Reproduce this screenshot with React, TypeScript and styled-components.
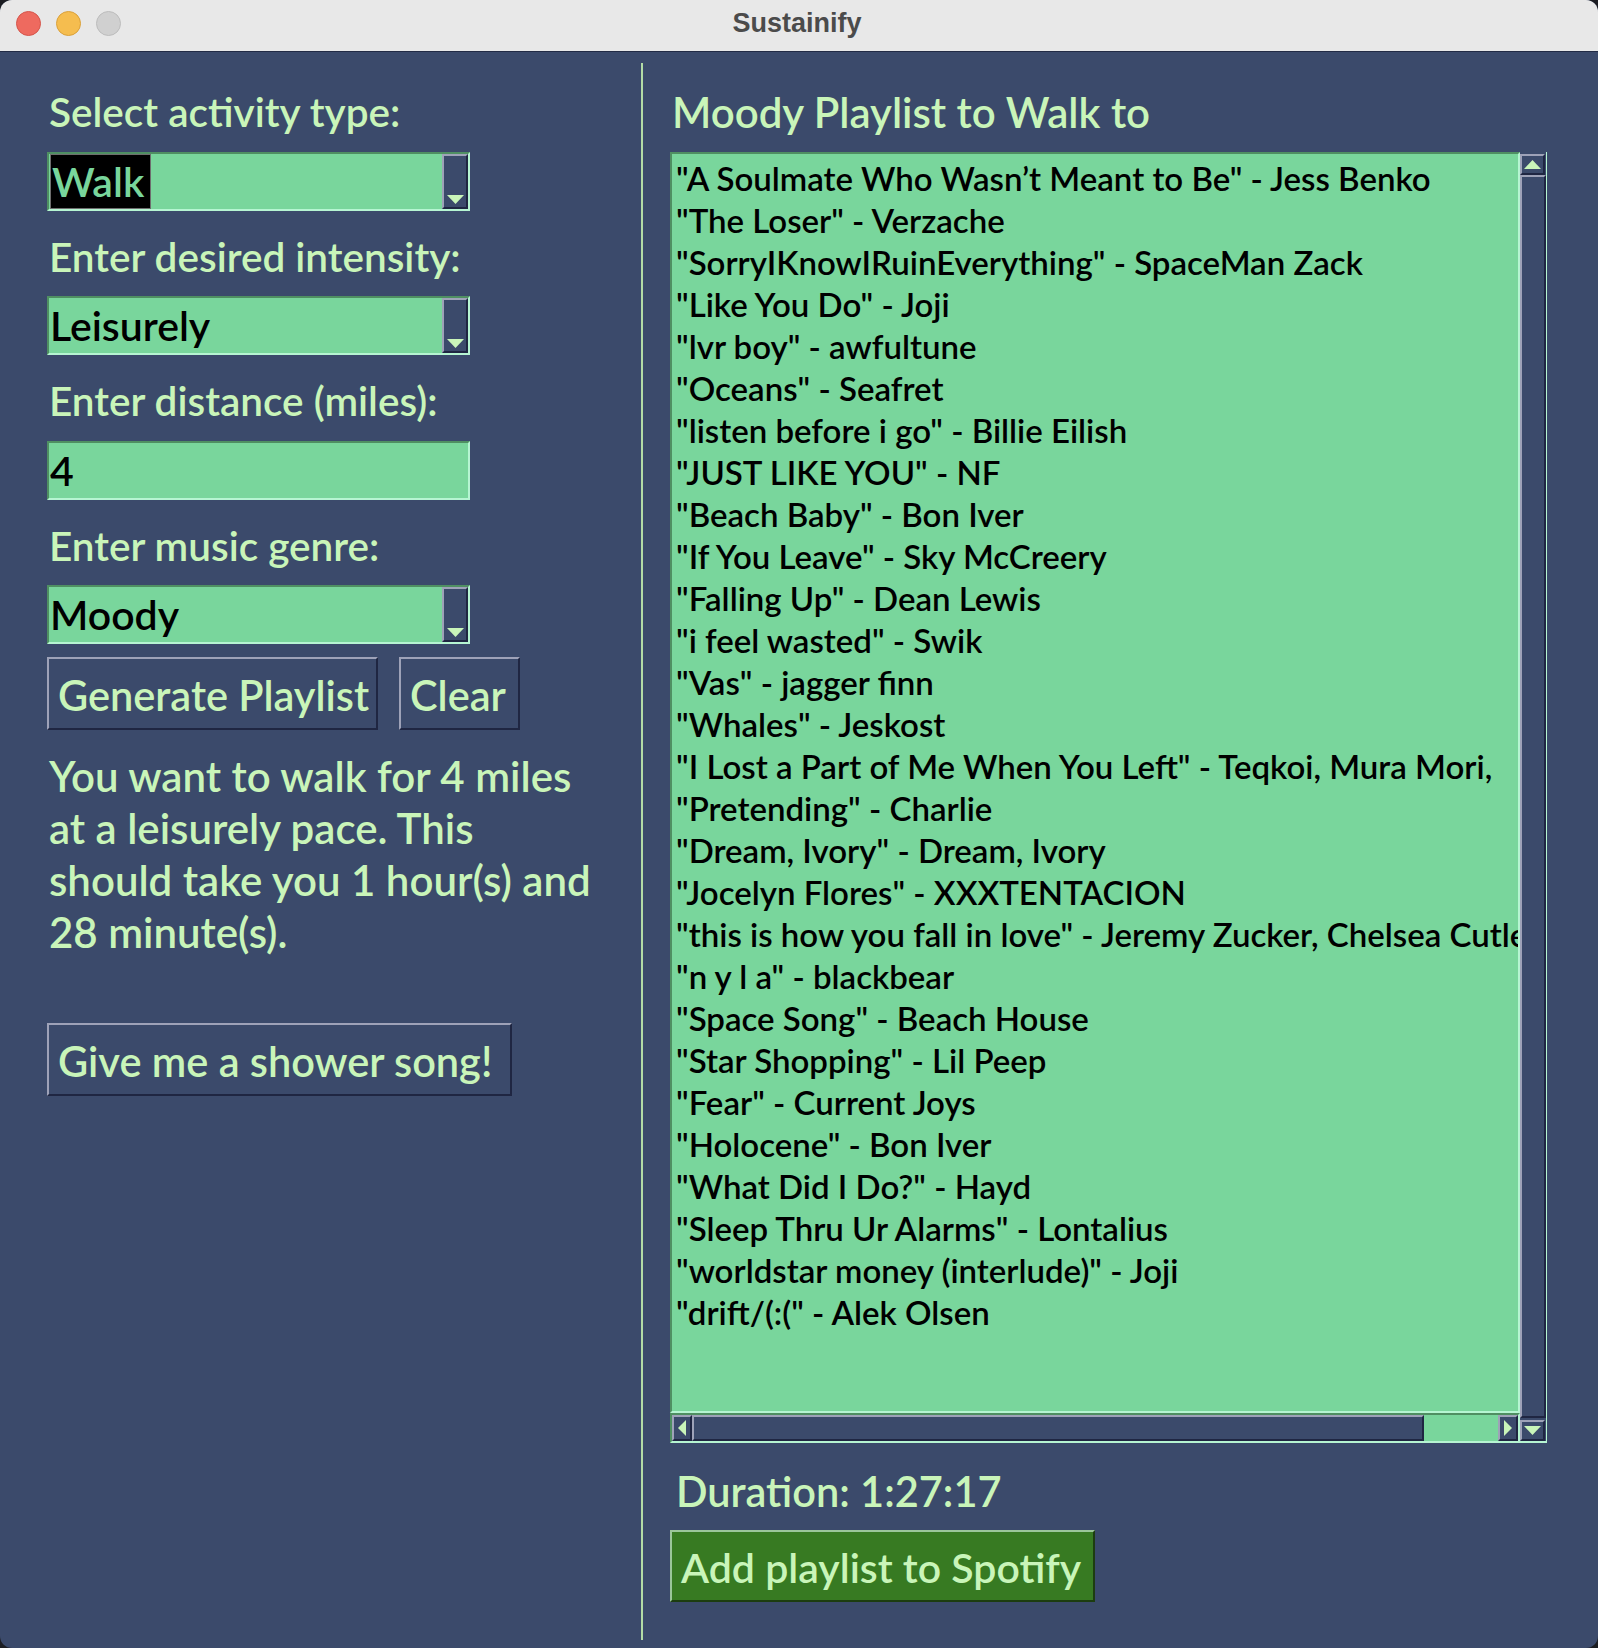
import React from 'react';
import styled, { createGlobalStyle } from 'styled-components';

const C = {
  bg: '#3b4a6b',
  text: '#c9f5b9',
  field: '#79d69c',
  fieldDark: '#4f8f62',
  fieldLight: '#b6f5d2',
  edgeLight: '#9ea2b8',
  edgeDark: '#1f2642',
  sep: '#b3dca6',
};

const FONT = `"Lato", "Noto Sans", sans-serif`;

const GlobalStyle = createGlobalStyle`
  html, body { margin: 0; padding: 0; background: #1c1d22; }
  body { width: 1598px; height: 1648px; overflow: hidden; }
  *, *::before, *::after { box-sizing: border-box; }
`;

const Window = styled.div`
  width: 1598px;
  height: 1648px;
  border-radius: 12px;
  overflow: hidden;
  display: flex;
  flex-direction: column;
  background: ${C.bg};
  font-family: ${FONT};
  font-weight: 600;
`;

const TitleBar = styled.div`
  height: 52px;
  flex: none;
  background: #e8e8e8;
  border-bottom: 1px solid #222b45;
  display: grid;
  grid-template-columns: 1fr auto 1fr;
  align-items: center;
  padding: 0 0 4px 16px;
`;

const Lights = styled.div`
  display: flex;
  gap: 15px;
`;

const Light = styled.span<{ $fill: string; $rim: string }>`
  width: 25px;
  height: 25px;
  border-radius: 50%;
  background: ${(p) => p.$fill};
  border: 1px solid ${(p) => p.$rim};
`;

const WindowTitle = styled.div`
  font-family: "Liberation Sans", Arial, sans-serif;
  font-weight: 700;
  font-size: 27px;
  color: #4b4b4b;
  margin-left: -20px;
`;

const Body = styled.div`
  flex: 1;
  display: flex;
`;

const LeftCol = styled.div`
  width: 641px;
  flex: none;
  padding: 14px 0 0 47px;
  display: flex;
  flex-direction: column;
  align-items: flex-start;
`;

const Separator = styled.div`
  width: 2px;
  flex: none;
  background: ${C.sep};
  margin: 11px 0 8px 0;
`;

const RightCol = styled.div`
  flex: 1;
  padding: 14px 51px 0 27px;
  display: flex;
  flex-direction: column;
  align-items: flex-start;
`;

const Label = styled.div`
  height: 85.5px;
  display: flex;
  align-items: center;
  padding: 6px 0 0 2px;
  font-size: 40.5px;
  color: ${C.text};
  white-space: nowrap;
`;

const Field = styled.div`
  width: 423px;
  height: 59px;
  display: flex;
  background: ${C.field};
  border-top: 2px solid ${C.fieldDark};
  border-left: 2px solid ${C.fieldDark};
  border-bottom: 2px solid ${C.fieldLight};
  border-right: 2px solid ${C.fieldLight};
`;

const FieldText = styled.div`
  flex: 1;
  display: flex;
  align-items: center;
  padding-left: 1px;
  font-size: 41px;
  color: #000;
  white-space: nowrap;
`;

const Selected = styled.span`
  align-self: stretch;
  display: flex;
  align-items: center;
  background: #000;
  color: ${C.field};
  border: 1px solid #6e6e6e;
  padding: 0 3px 0 1px;
  width: 101px;
`;

const Bevel = styled.div`
  background: ${C.bg};
  border-top: 2px solid ${C.edgeLight};
  border-left: 2px solid ${C.edgeLight};
  border-bottom: 2px solid ${C.edgeDark};
  border-right: 2px solid ${C.edgeDark};
`;

const DropButton = styled(Bevel)`
  width: 26px;
  display: flex;
  align-items: flex-end;
  justify-content: center;
  padding-bottom: 3px;
`;

const ButtonRow = styled.div`
  display: flex;
  gap: 21px;
  margin-top: 13px;
`;

const Button = styled(Bevel)<{ $w: number; $top?: number }>`
  width: ${(p) => p.$w}px;
  height: 73px;
  margin-top: ${(p) => p.$top ?? 0}px;
  display: flex;
  align-items: center;
  padding: 3px 0 0 9px;
  font-size: 41.5px;
  color: ${C.text};
  white-space: nowrap;
`;

const Paragraph = styled.div`
  margin-top: 20px;
  font-size: 42px;
  line-height: 52px;
  color: ${C.text};
  padding-left: 2px;
  white-space: nowrap;
`;

const Heading = styled(Label)`
  font-size: 42px;
`;

const ListWidget = styled.div`
  width: 877px;
  height: 1291px;
  display: grid;
  grid-template-columns: 1fr 27px;
  grid-template-rows: 1fr 30px;
`;

const ListArea = styled.div`
  background: ${C.field};
  border-top: 2px solid ${C.fieldDark};
  border-left: 2px solid ${C.fieldDark};
  border-bottom: 2px solid ${C.fieldLight};
  border-right: 2px solid ${C.fieldLight};
  padding: 3px 0 0 4px;
  overflow: hidden;
`;

const Item = styled.div`
  height: 42px;
  line-height: 42px;
  font-size: 33px;
  color: #000;
  white-space: nowrap;
`;

const HScroll = styled.div`
  display: flex;
  background: ${C.field};
  border-top: 2px solid ${C.fieldDark};
  border-left: 2px solid ${C.fieldDark};
  border-bottom: 2px solid ${C.fieldLight};
  border-right: 2px solid ${C.fieldLight};
`;

const ArrowButton = styled(Bevel)<{ $long: number }>`
  flex: none;
  width: ${(p) => (p.$long ? 20 : 25)}px;
  height: ${(p) => (p.$long ? 26 : 21)}px;
  display: flex;
  align-items: center;
  justify-content: center;
`;

const HThumb = styled(Bevel)`
  width: 732px;
  flex: none;
`;

const Trough = styled.div`
  flex: 1;
`;

const VScroll = styled.div`
  grid-column: 2;
  grid-row: 1 / span 2;
  display: flex;
  flex-direction: column;
  padding-top: 2px;
  border-right: 1px solid ${C.fieldLight};
  border-bottom: 2px solid ${C.fieldLight};
`;

const VThumb = styled(Bevel)`
  flex: 1;
  margin-bottom: 2px;
`;

const Duration = styled.div`
  margin-top: 20px;
  height: 53px;
  display: flex;
  align-items: center;
  padding: 3px 0 0 6px;
  font-size: 41.5px;
  color: ${C.text};
`;

const SpotifyButton = styled.div`
  margin-top: 14px;
  width: 425px;
  height: 72px;
  display: flex;
  align-items: center;
  padding: 3px 0 0 9px;
  background: #377a22;
  border-top: 2px solid #9bc69a;
  border-left: 2px solid #9bc69a;
  border-bottom: 2px solid #1c3d10;
  border-right: 2px solid #1c3d10;
  font-size: 41px;
  color: ${C.text};
  white-space: nowrap;
`;

type Dir = 'up' | 'down' | 'left' | 'right';
const Tri = ({ dir, w = 17, h = 9 }: { dir: Dir; w?: number; h?: number }) => {
  const vertical = dir === 'up' || dir === 'down';
  const W = vertical ? w : h;
  const H = vertical ? h : w;
  const pts =
    dir === 'down'
      ? `0,0 ${W},0 ${W / 2},${H}`
      : dir === 'up'
      ? `0,${H} ${W},${H} ${W / 2},0`
      : dir === 'left'
      ? `${W},0 ${W},${H} 0,${H / 2}`
      : `0,0 0,${H} ${W},${H / 2}`;
  return (
    <svg width={W} height={H} viewBox={`0 0 ${W} ${H}`} style={{ display: 'block' }}>
      <polygon points={pts} fill={C.text} />
    </svg>
  );
};

const songs = [
  '"A Soulmate Who Wasn\u2019t Meant to Be" - Jess Benko',
  '"The Loser" - Verzache',
  '"SorryIKnowIRuinEverything" - SpaceMan Zack',
  '"Like You Do" - Joji',
  '"lvr boy" - awfultune',
  '"Oceans" - Seafret',
  '"listen before i go" - Billie Eilish',
  '"JUST LIKE YOU" - NF',
  '"Beach Baby" - Bon Iver',
  '"If You Leave" - Sky McCreery',
  '"Falling Up" - Dean Lewis',
  '"i feel wasted" - Swik',
  '"Vas" - jagger finn',
  '"Whales" - Jeskost',
  '"I Lost a Part of Me When You Left" - Teqkoi, Mura Mori,',
  '"Pretending" - Charlie',
  '"Dream, Ivory" - Dream, Ivory',
  '"Jocelyn Flores" - XXXTENTACION',
  '"this is how you fall in love" - Jeremy Zucker, Chelsea Cutler',
  '"n y l a" - blackbear',
  '"Space Song" - Beach House',
  '"Star Shopping" - Lil Peep',
  '"Fear" - Current Joys',
  '"Holocene" - Bon Iver',
  '"What Did I Do?" - Hayd',
  '"Sleep Thru Ur Alarms" - Lontalius',
  '"worldstar money (interlude)" - Joji',
  '"drift/(:(" - Alek Olsen',
];

const Combo = ({ children }: { children: React.ReactNode }) => (
  <Field>
    <FieldText>{children}</FieldText>
    <DropButton>
      <Tri dir="down" />
    </DropButton>
  </Field>
);

export default function App() {
  return (
    <>
      <GlobalStyle />
      <Window>
        <TitleBar>
          <Lights>
            <Light $fill="#ee6a5f" $rim="#d4554b" />
            <Light $fill="#f5bd4f" $rim="#d9a03a" />
            <Light $fill="#d0d0d0" $rim="#bcbcbc" />
          </Lights>
          <WindowTitle>Sustainify</WindowTitle>
          <div />
        </TitleBar>
        <Body>
          <LeftCol>
            <Label>Select activity type:</Label>
            <Combo>
              <Selected>Walk</Selected>
            </Combo>
            <Label>Enter desired intensity:</Label>
            <Combo>Leisurely</Combo>
            <Label>Enter distance (miles):</Label>
            <Field>
              <FieldText>4</FieldText>
            </Field>
            <Label>Enter music genre:</Label>
            <Combo>Moody</Combo>
            <ButtonRow>
              <Button $w={331}>Generate Playlist</Button>
              <Button $w={121}>Clear</Button>
            </ButtonRow>
            <Paragraph>
              You want to walk for 4 miles
              <br />
              at a leisurely pace. This
              <br />
              should take you 1 hour(s) and
              <br />
              28 minute(s).
            </Paragraph>
            <Button $w={465} $top={65}>
              Give me a shower song!
            </Button>
          </LeftCol>
          <Separator />
          <RightCol>
            <Heading>Moody Playlist to Walk to</Heading>
            <ListWidget>
              <ListArea>
                {songs.map((s) => (
                  <Item key={s}>{s}</Item>
                ))}
              </ListArea>
              <HScroll>
                <ArrowButton $long={1}>
                  <Tri dir="left" w={16} h={8} />
                </ArrowButton>
                <HThumb />
                <Trough />
                <ArrowButton $long={1}>
                  <Tri dir="right" w={16} h={8} />
                </ArrowButton>
              </HScroll>
              <VScroll>
                <ArrowButton $long={0}>
                  <Tri dir="up" />
                </ArrowButton>
                <VThumb />
                <ArrowButton $long={0}>
                  <Tri dir="down" />
                </ArrowButton>
              </VScroll>
            </ListWidget>
            <Duration>Duration: 1:27:17</Duration>
            <SpotifyButton>Add playlist to Spotify</SpotifyButton>
          </RightCol>
        </Body>
      </Window>
    </>
  );
}
